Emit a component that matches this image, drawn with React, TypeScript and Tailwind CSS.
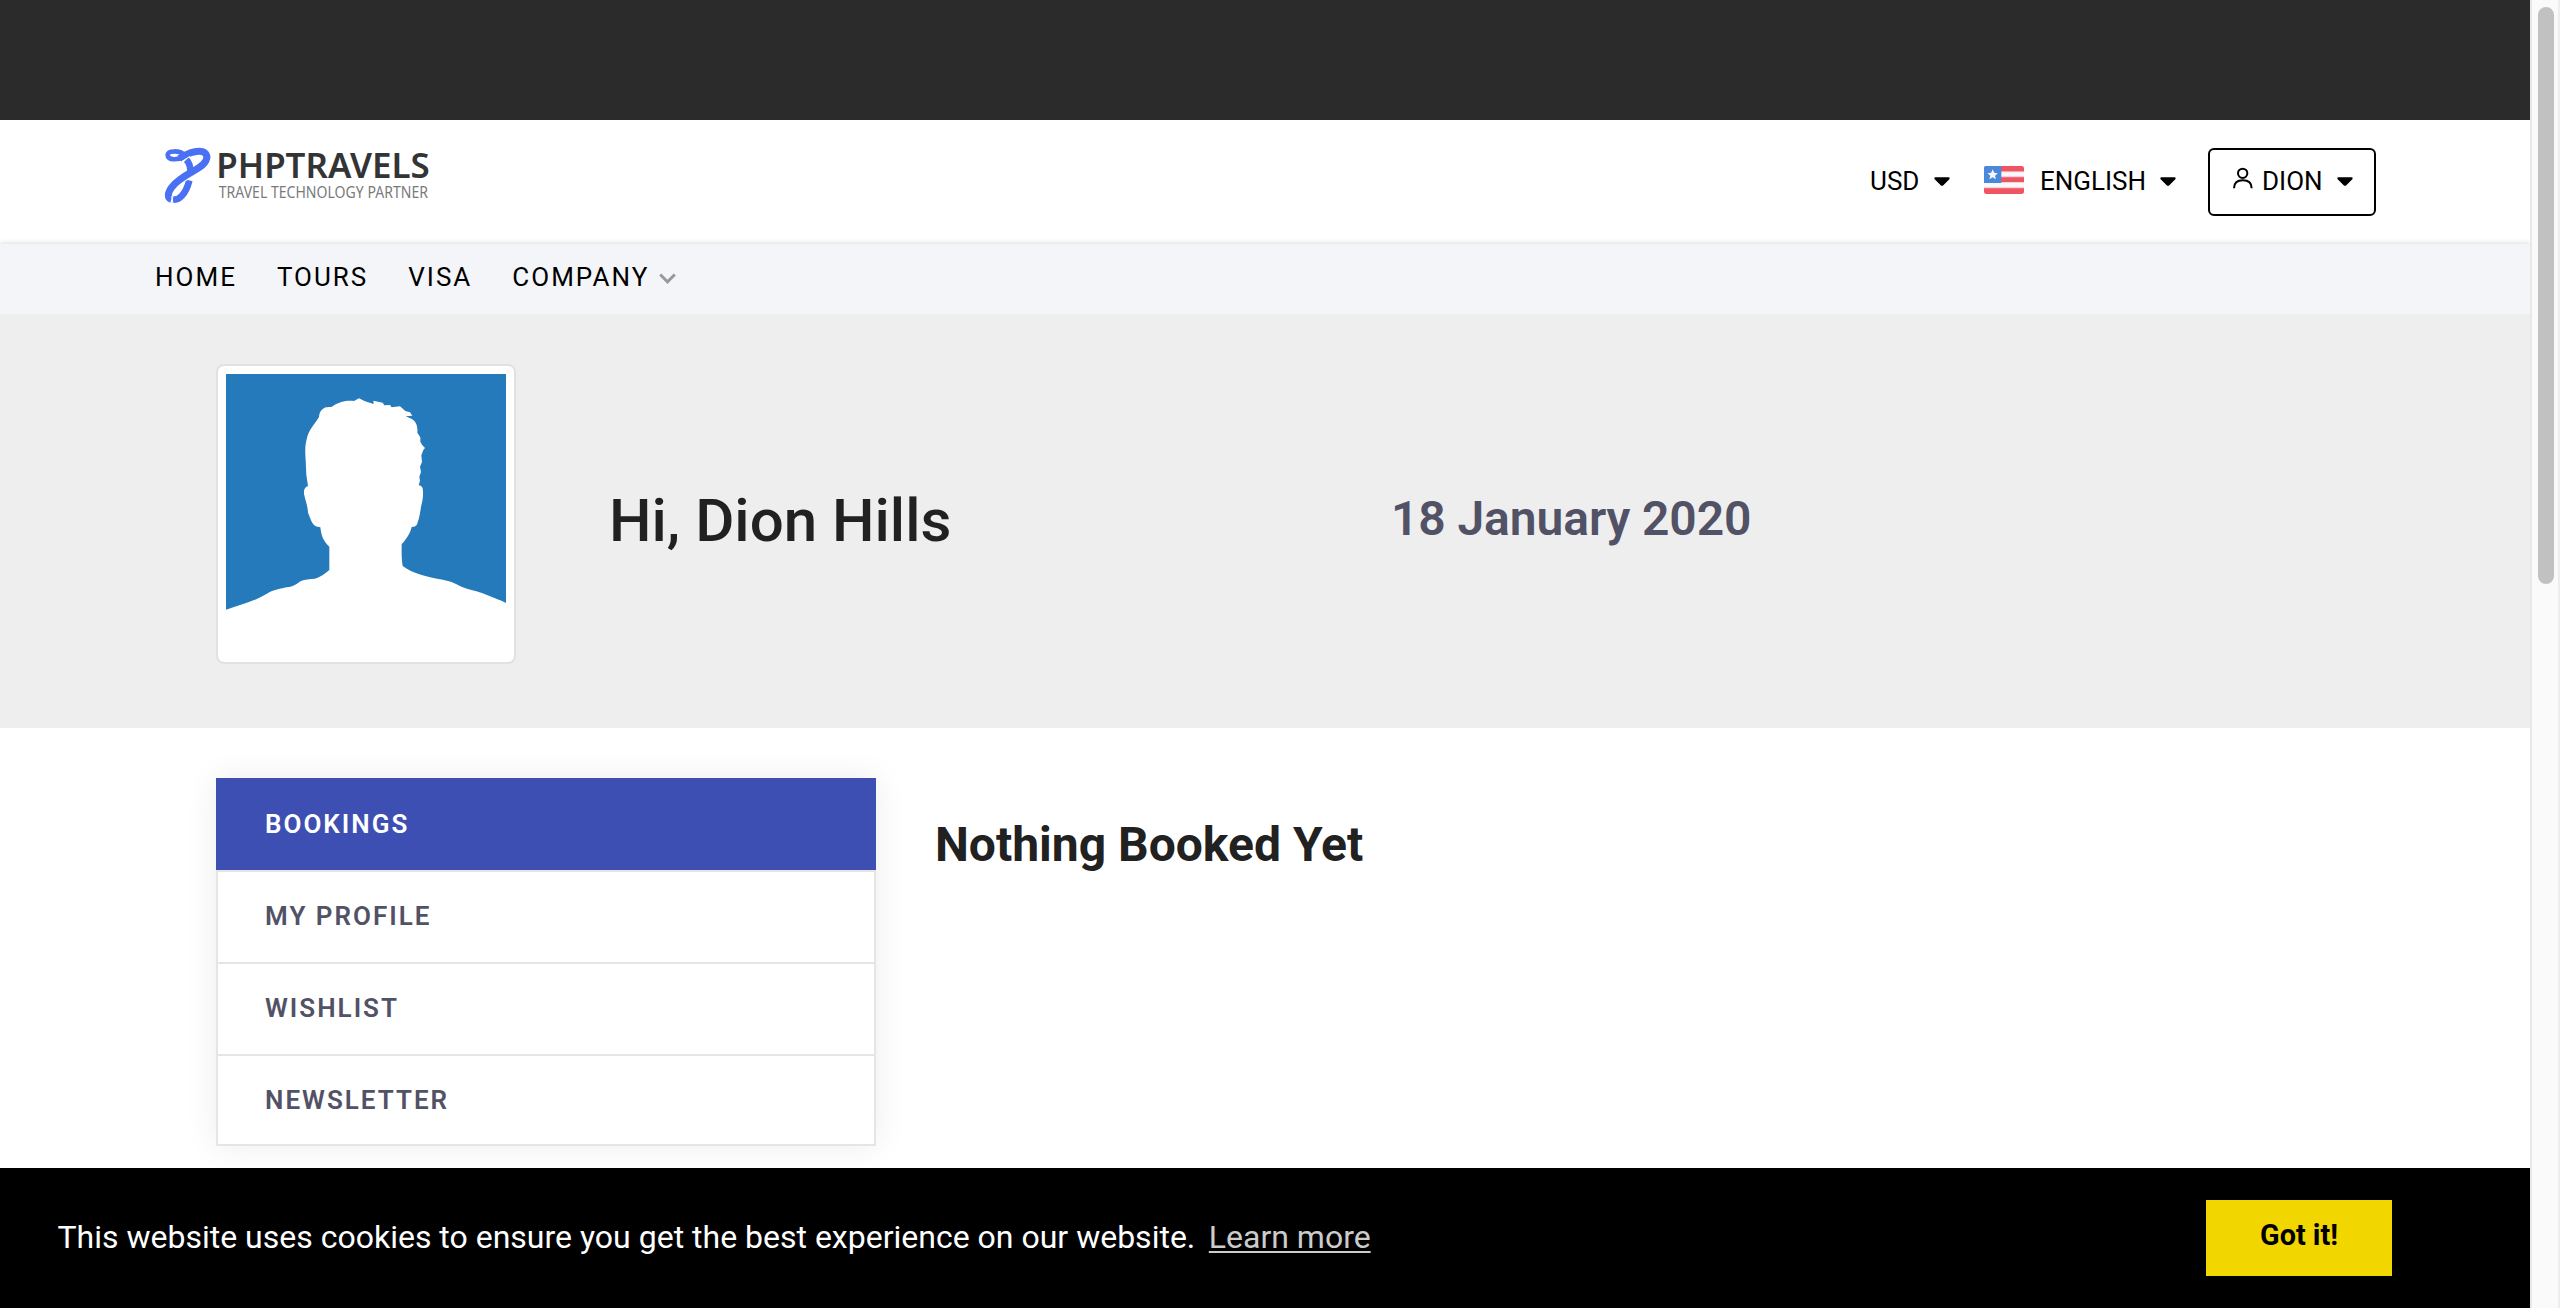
function Caret() {
  return (
    <svg viewBox="0 0 48 30" className="h-[10px] w-4 shrink-0" fill="#000">
      <path d="M4 1h40c3 0 4 3 2 5.500L28 24.500c-2 2.300-6 2.300-8 0L2 6.500C0 4 1 1 4 1z" />
    </svg>
  );
}

function Logo() {
  return (
    <svg viewBox="72 108 810 180" className="h-[60px] w-[270px] overflow-visible">
      <g fill="none" stroke="#4a70f4" strokeLinejoin="round">
        <path d="M130 132C118 122 85 121 83 134C82 152 113 151 138 139" strokeWidth="14" />
        <path d="M118 146C150 124 184 118 197 131C206 143 198 160 174 175C148 191 114 206 95 232C82 250 82 264 94 268" strokeWidth="21" />
        <path d="M98 268C116 273 137 254 148 211" strokeWidth="20" />
        <path d="M139 149C149 159 152 172 151 190" strokeWidth="20" />
      </g>
      <path d="M126 154L150 139M136 212L164 200M95 258L99 280" stroke="#fff" strokeWidth="3" />
      <text x="229" y="205" fontFamily="'Noto Sans', sans-serif" fontWeight="600" fontSize="102" fill="#333435" textLength="640" lengthAdjust="spacingAndGlyphs">
        PHPTRAVELS
      </text>
      <text x="236" y="265" fontFamily="'Noto Sans', sans-serif" fontWeight="400" fontSize="47" fill="#7a7a7a" textLength="628" lengthAdjust="spacingAndGlyphs">
        TRAVEL TECHNOLOGY PARTNER
      </text>
    </svg>
  );
}

function Flag() {
  return (
    <svg viewBox="0 0 120 84" className="h-7 w-10 shrink-0">
      <clipPath id="flag">
        <rect width="120" height="84" rx="7" />
      </clipPath>
      <g clipPath="url(#flag)">
        <rect width="120" height="84" fill="#f05463" />
        <path d="M50 16h70v18H50zM0 48h120v19H0z" fill="#f8c3cb" />
        <path d="M50 19h70v12H50zM0 50h120v14H0z" fill="#f6f8fd" />
        <rect width="52" height="51" fill="#4a88da" />
        <path d="M26 10l4.500 10.500 11 1-8.500 7.500 3 11-10-6-10 6 3-11-8.500-7.500 11-1z" fill="#f5f7fa" />
      </g>
    </svg>
  );
}

function UserIcon() {
  return (
    <svg viewBox="0 0 60 66" className="h-[22px] w-5 shrink-0" fill="none" stroke="#000" strokeWidth="6">
      <circle cx="29" cy="19" r="14" />
      <path d="M3 64C3 47 15 40 29.500 40S56 47 56 64" />
    </svg>
  );
}

function Avatar() {
  return (
    <svg viewBox="78 72 840 840" className="h-[280px] w-[280px]">
      <path
        fill="#257abb"
        d="M78 72H918V759C900 750 872 740 848 730C822 720 800 718 778 707C760 698 745 692 720 688C690 682 635 670 608 648C604 625 605 600 605 583C618 568 631 550 635 531C645 530 650 530 653 517C658 505 661 485 663 470C668 452 671 435 668 415C666 409 661 406 656 406L660 392L658 380L663 366L660 350L666 336L664 316L670 300L675 294L666 284L661 275L661 262L652 248C654 225 646 212 634 206L617 199L637 197L630 187L616 183L600 169L575 172L570 165L553 166L548 158L520 152L521 162L495 154L477 145L462 153C435 151 418 157 402 166C396 174 384 170 374 173C360 181 358 190 357 201C345 221 326 240 321 264C315 285 315 300 317 330L319 375L324 408C316 411 311 417 312 432C315 448 323 465 324 488C331 504 335 520 345 527C350 531 356 529 361 532C364 558 369 572 388 590V660C375 672 360 682 345 686C328 688 315 687 303 693C290 701 282 709 265 711C240 716 220 719 203 730C165 753 125 764 78 779Z"
      />
    </svg>
  );
}

const tabs = ["BOOKINGS", "MY PROFILE", "WISHLIST", "NEWSLETTER"];

function Header() {
  return (
    <header className="flex h-[124px] shrink-0 items-center justify-between bg-white pl-[164px] pr-[154px]">
      <div className="mb-3">
        <Logo />
      </div>
      <div className="flex items-center text-[26px] text-black">
        <span className="mb-0.5">USD</span>
        <div className="ml-[14.500px]">
          <Caret />
        </div>
        <div className="mb-1 ml-[34px]">
          <Flag />
        </div>
        <span className="mb-0.5 ml-4">ENGLISH</span>
        <div className="ml-3.5">
          <Caret />
        </div>
        <button className="ml-8 flex h-[68px] w-[168px] items-center rounded-md border-2 border-black pl-[23px]">
          <div className="mb-2">
            <UserIcon />
          </div>
          <span className="mb-0.5 ml-[9px]">DION</span>
          <div className="ml-[14.500px]">
            <Caret />
          </div>
        </button>
      </div>
    </header>
  );
}

export default function App() {
  return (
    <div className="flex h-[1308px] w-[2560px] overflow-hidden bg-white font-['Roboto',sans-serif]">
      <div className="flex w-[2530px] flex-col overflow-hidden">
        <div className="h-[120px] shrink-0 bg-[#2b2b2b]" />
        <Header />
        <nav className="flex h-[70px] shrink-0 items-center gap-10 bg-[#f4f5f8] pb-1 pl-[155px] text-[26px] tracking-[2px] text-black shadow-[0_-1px_5px_rgba(0,0,0,0.14)]">
          <span>HOME</span>
          <span>TOURS</span>
          <span>VISA</span>
          <span className="flex items-center gap-2.5">
            COMPANY
            <svg viewBox="0 0 17 11" className="mt-0.5 h-[11px] w-[17px]" fill="none" stroke="#999" strokeWidth="3">
              <path d="M1.200 1.500l7.300 7.300 7.300-7.300" />
            </svg>
          </span>
        </nav>
        <section className="flex h-[414px] shrink-0 items-center bg-[#eee] pl-[216px]">
          <div className="mb-3.5 h-[300px] w-[300px] shrink-0 rounded-lg border-2 border-[#dee2e6] bg-white p-2">
            <Avatar />
          </div>
          <h1 className="ml-[93px] w-[782px] text-[60px] leading-[60px] font-medium text-[#212121]">Hi, Dion Hills</h1>
          <p className="mb-1 text-[48px] leading-[48px] font-semibold tracking-[-0.1px] text-[#525266]">18 January 2020</p>
        </section>
        <main className="flex flex-1 items-start pt-[50px] pl-[216px]">
          <ul className="w-[660px] shrink-0 border-b-2 border-[#e5e5e5] bg-white shadow-[0_0_30px_rgba(0,0,0,0.08)]">
            {tabs.map((t, i) => (
              <li
                key={t}
                className={
                  i === 0
                    ? "flex h-[92px] items-center bg-[#3d4fb3] pl-[49px] text-[26px] font-semibold tracking-[2px] text-white"
                    : i === 3
                      ? "flex h-[90px] items-center border-x-2 border-t-2 border-[#e5e5e5] pl-[47px] text-[26px] font-semibold tracking-[2px] text-[#525266]"
                      : "flex h-[92px] items-center border-x-2 border-t-2 border-[#e5e5e5] pb-0.5 pl-[47px] text-[26px] font-semibold tracking-[2px] text-[#525266]"
                }
              >
                {t}
              </li>
            ))}
          </ul>
          <h2 className="mt-[43px] ml-[59px] text-[48px] leading-[48px] font-bold text-[#212121]">Nothing Booked Yet</h2>
        </main>
        <footer className="flex h-[140px] shrink-0 items-center justify-between bg-black pr-[138px] pl-[57.500px]">
          <p className="mb-0.5 text-[32px] leading-[48px] text-white">
            This website uses cookies to ensure you get the best experience on our website.
            <a className="ml-[13.500px] text-[#ccc] underline decoration-2 underline-offset-[3px]">Learn more</a>
          </p>
          <button className="h-[76px] w-[186px] bg-[#f1d600] pb-1 text-[28.800px] font-bold text-black">Got it!</button>
        </footer>
      </div>
      <div className="flex w-[30px] justify-center border-x-2 border-l-[#e8e8e8] border-r-[#ededed] bg-[#fafafa] pt-[7px] pl-[2px]">
        <div className="h-[577px] w-4 rounded-full bg-[#c1c1c1]" />
      </div>
    </div>
  );
}
